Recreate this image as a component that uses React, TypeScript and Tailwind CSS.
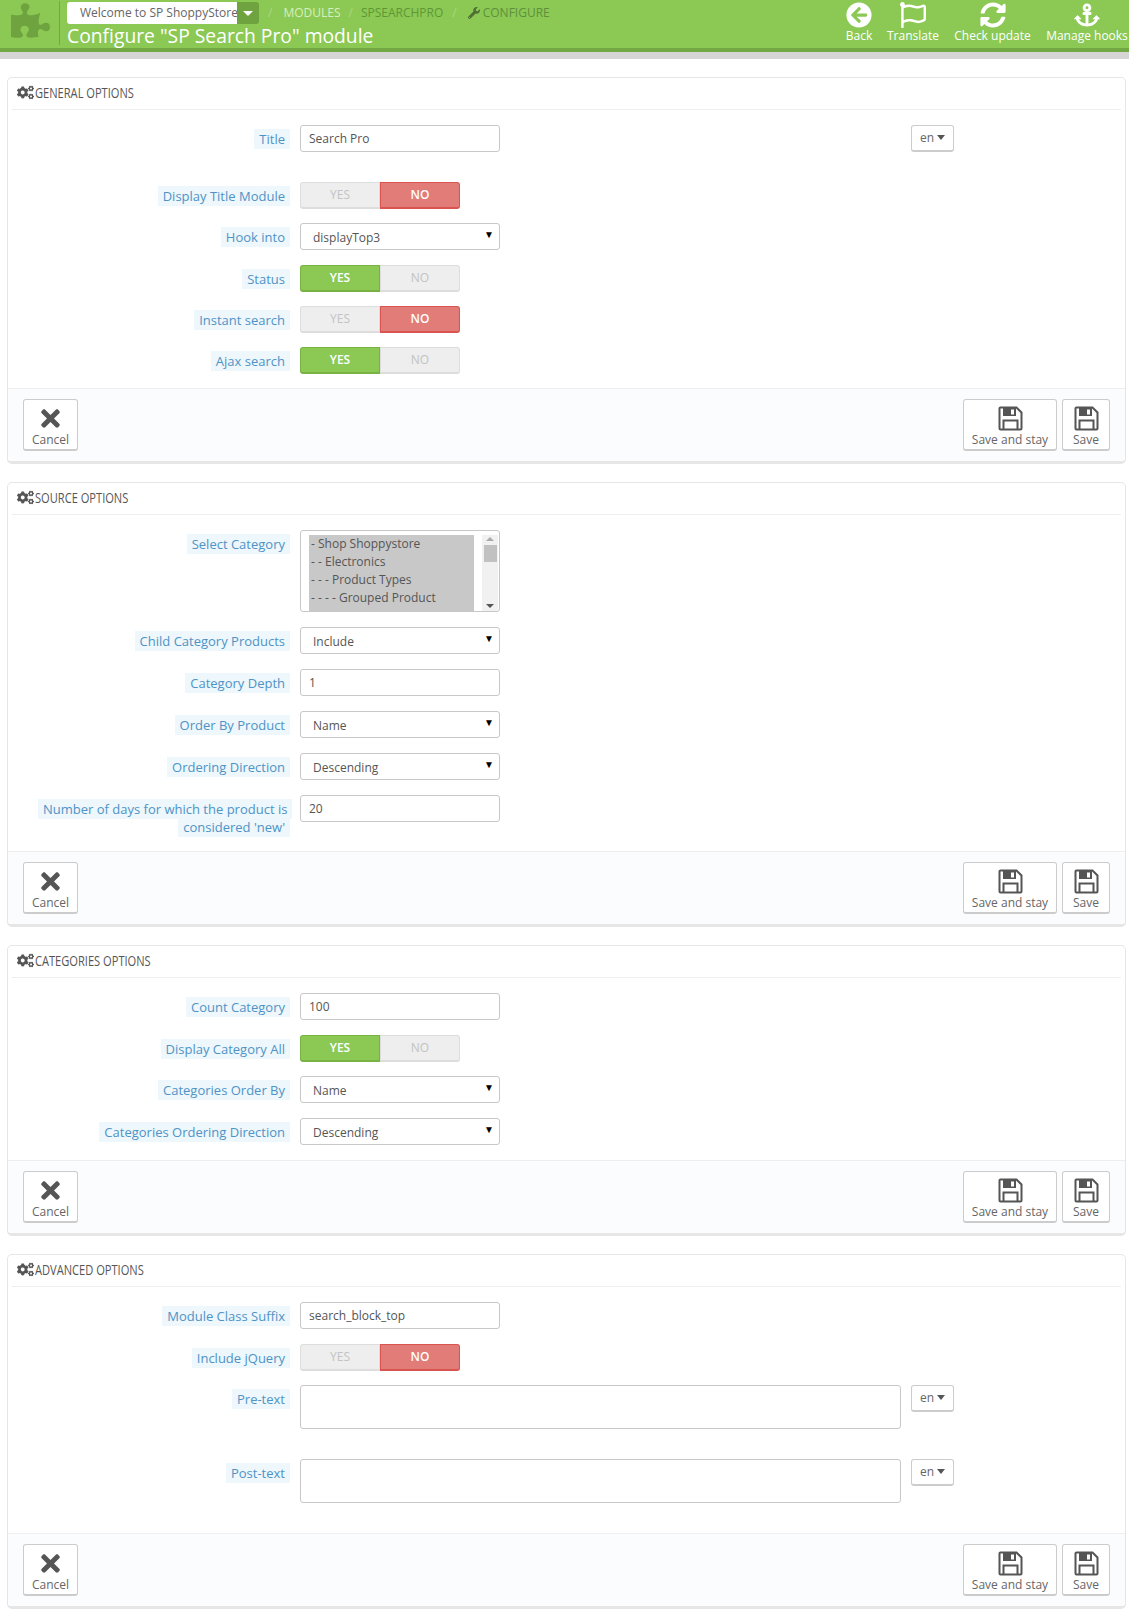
import type { ReactNode } from "react";
import {
  FaAnchor,
  FaArrowCircleLeft,
  FaCogs,
  FaPuzzlePiece,
  FaRegFlag,
  FaSyncAlt,
  FaTimes,
  FaWrench,
} from "react-icons/fa";

const fieldClass = "h-[27px] w-[200px] rounded-[3px] border border-[#c7c7c7] bg-white text-[#555]";

function SaveIcon() {
  return (
    <svg width="25" height="25" viewBox="0 0 25 25">
      <path d="M2.5 1.5h16l5 5v16a1 1 0 0 1-1 1h-20a1 1 0 0 1-1-1v-20a1 1 0 0 1 1-1z" fill="none" stroke="#555" strokeWidth="2" />
      <path d="M5 2h13v8H5z" fill="#555" />
      <path d="M13 3.5h3v5h-3z" fill="#fff" />
      <path d="M5.5 23v-8.5h14V23" fill="none" stroke="#555" strokeWidth="2" />
    </svg>
  );
}

function Label({ children }: { children: ReactNode }) {
  return (
    <div className="w-[282px] shrink-0 pl-[30px] pt-[5px] text-right text-[13px] leading-[18px]">
      <span className="bg-[#edf7fc] px-[5px] py-[1px] text-[#4f93c6] [box-decoration-break:clone]">{children}</span>
    </div>
  );
}

function Row({ label, children, mb = "mb-[15px]" }: { label: ReactNode; children: ReactNode; mb?: string }) {
  return (
    <div className={`flex gap-[10px] ${mb}`}>
      <Label>{label}</Label>
      {children}
    </div>
  );
}

function TextField({ value }: { value: string }) {
  return <div className={`${fieldClass} px-[8px] text-[12px] leading-[25px]`}>{value}</div>;
}

function SelectField({ value }: { value: string }) {
  return (
    <div className={`${fieldClass} relative pl-[12px] text-[12px] leading-[27px]`}>
      {value}
      <span className="absolute right-[5px] top-[-3px] text-[10px] text-black">▼</span>
    </div>
  );
}

function Toggle({ on }: { on: boolean }) {
  return (
    <div className="flex h-[27px] w-[160px] text-[12px] font-semibold leading-[23px]">
      <div
        className={`w-[80px] rounded-l-[3px] border border-b-2 text-center ${
          on ? "border-[#78b243] bg-[#8bc954] text-white" : "border-[#ddd] bg-[#eee] font-normal text-[#c3c3c3]"
        }`}
      >
        YES
      </div>
      <div
        className={`w-[80px] rounded-r-[3px] border border-b-2 text-center ${
          on ? "border-[#ddd] bg-[#eee] font-normal text-[#c3c3c3]" : "border-[#d9534f] bg-[#e27c79] text-white"
        }`}
      >
        NO
      </div>
    </div>
  );
}

function LangButton({ ml }: { ml: string }) {
  return (
    <div
      className={`flex h-[27px] w-[43px] items-center justify-center gap-[3px] rounded-[3px] border border-b-2 border-[#ccc] bg-white text-[12px] text-[#666] ${ml}`}
    >
      en
      <span className="mt-[-2px] h-0 w-0 border-x-[4px] border-t-[5px] border-x-transparent border-t-[#555]" />
    </div>
  );
}

function ActionButton({ icon, text, w }: { icon: ReactNode; text: string; w: string }) {
  return (
    <div
      className={`flex h-[52px] flex-col items-center rounded-[3px] border border-b-2 border-[#ccc] bg-white pt-[4px] ${w}`}
    >
      <div className="flex h-[28px] items-center text-[27px] text-[#555]">{icon}</div>
      <div className="text-[12px] leading-[15px] text-[#666]">{text}</div>
    </div>
  );
}

function Panel({ title, children, mb }: { title: string; children: ReactNode; mb: string }) {
  return (
    <section className={`ml-[7px] mr-[3px] rounded-[5px] border border-b-[3px] border-[#e6e6e6] bg-white ${mb}`}>
      <div className="mx-[4px] flex h-[32px] items-center gap-[1px] border-b border-[#eee] pb-[2px] pl-[5px] text-[#555]">
        <FaCogs className="text-[17px]" />
        <span className="origin-left scale-x-[0.74] text-[15px] uppercase">{title}</span>
      </div>
      <div className="pt-[15px]">{children}</div>
      <div className="flex items-center gap-[5px] rounded-b-[5px] border-t border-[#eee] bg-[#fbfcfe] px-[15px] pb-[10px] pt-[10px]">
        <ActionButton icon={<FaTimes />} text="Cancel" w="w-[55px]" />
        <div className="flex-1" />
        <ActionButton icon={<SaveIcon />} text="Save and stay" w="w-[94px]" />
        <ActionButton icon={<SaveIcon />} text="Save" w="w-[48px]" />
      </div>
    </section>
  );
}

function CategoryList() {
  const items = ["- Shop Shoppystore", "- - Electronics", "- - - Product Types", "- - - - Grouped Product"];
  return (
    <div className="flex h-[82px] w-[200px] rounded-[3px] border border-[#c7c7c7] bg-white pl-[8px] pt-[4px] text-[12px] text-[#555]">
      <div className="h-[76px] w-[165px] overflow-hidden bg-[#c8c8c8] pl-[2px]">
        {items.map((item) => (
          <div key={item} className="h-[18px] leading-[18px]">
            {item}
          </div>
        ))}
      </div>
      <div className="ml-[8px] flex w-[16px] flex-col items-center bg-[#f1f1f1]">
        <span className="mt-[2px] h-0 w-0 border-x-[4px] border-b-[4px] border-x-transparent border-b-[#aaa]" />
        <span className="mt-[4px] h-[17px] w-[13px] bg-[#c1c1c1]" />
        <span className="mb-[3px] mt-auto h-0 w-0 border-x-[4px] border-t-[4px] border-x-transparent border-t-[#555]" />
      </div>
    </div>
  );
}

function TextArea() {
  return <div className="h-[44px] w-[601px] rounded-[3px] border border-[#c7c7c7] bg-white" />;
}

function HeaderAction({ icon, text, w }: { icon: ReactNode; text: string; w: string }) {
  return (
    <div className={`flex flex-col items-center text-white ${w}`}>
      <div className="flex h-[27px] items-center text-[26px]">{icon}</div>
      <div className="whitespace-nowrap text-[12px] leading-[16px]">{text}</div>
    </div>
  );
}

export default function App() {
  return (
    <div className="min-h-[1613px] overflow-hidden bg-white [font-family:'Open_Sans',sans-serif]">
      <header className="border-b-[7px] border-[#d5d5d5]">
        <div className="flex h-[52px] border-b-[4px] border-[#72a844] bg-[#8bc954]">
          <div className="ml-[11px] mt-[1px] h-[44px] w-[49px] border-r border-[#72a844]">
            <FaPuzzlePiece className="text-[39px] text-[#6fa33f]" />
          </div>
          <div className="ml-[7px] flex-1">
            <div className="mt-[2px] flex h-[22px] items-center text-[12px]">
              <div className="h-[22px] w-[170px] overflow-hidden whitespace-nowrap rounded-l-[3px] bg-white pl-[13px] leading-[22px] text-[#666]">
                Welcome to SP ShoppyStore
              </div>
              <div className="flex h-[22px] w-[22px] items-center justify-center rounded-r-[3px] bg-[#6fa33f]">
                <span className="h-0 w-0 border-x-[5px] border-t-[5px] border-x-transparent border-t-white" />
              </div>
              <span className="ml-[9px] text-[#a9d886]">/</span>
              <span className="ml-[11px] text-[#d8efbd]">MODULES</span>
              <span className="ml-[8px] text-[#a9d886]">/</span>
              <span className="ml-[8px] text-[#5f9635]">SPSEARCHPRO</span>
              <span className="ml-[9px] text-[#a9d886]">/</span>
              <FaWrench className="ml-[11px] text-[12px] text-[#4f6f33]" />
              <span className="ml-[3px] text-[#5f8f3c]">CONFIGURE</span>
            </div>
            <div className="mt-[-1px] text-[19.3px] leading-[25px] text-white">Configure "SP Search Pro" module</div>
          </div>
          <div className="mr-[1px] flex gap-[15px] pt-[1px]">
            <HeaderAction icon={<FaArrowCircleLeft />} text="Back" w="w-[26px]" />
            <HeaderAction icon={<FaRegFlag />} text="Translate" w="w-[52px]" />
            <HeaderAction icon={<FaSyncAlt />} text="Check update" w="w-[77px]" />
            <HeaderAction icon={<FaAnchor />} text="Manage hooks" w="w-[82px]" />
          </div>
        </div>
      </header>

      <div className="pt-[18px]">
        <Panel title="General options" mb="mb-[18px]">
          <Row label="Title" mb="mb-[30px]">
            <TextField value="Search Pro" />
            <LangButton ml="ml-[401px]" />
          </Row>
          <Row label="Display Title Module" mb="mb-[14px]">
            <Toggle on={false} />
          </Row>
          <Row label="Hook into">
            <SelectField value="displayTop3" />
          </Row>
          <Row label="Status" mb="mb-[14px]">
            <Toggle on />
          </Row>
          <Row label="Instant search" mb="mb-[14px]">
            <Toggle on={false} />
          </Row>
          <Row label="Ajax search" mb="mb-[14px]">
            <Toggle on />
          </Row>
        </Panel>

        <Panel title="Source options" mb="mb-[18px]">
          <Row label="Select Category">
            <CategoryList />
          </Row>
          <Row label="Child Category Products">
            <SelectField value="Include" />
          </Row>
          <Row label="Category Depth">
            <TextField value="1" />
          </Row>
          <Row label="Order By Product">
            <SelectField value="Name" />
          </Row>
          <Row label="Ordering Direction">
            <SelectField value="Descending" />
          </Row>
          <Row
            label={
              <>
                Number of days for which the product is
                <br />
                considered 'new'
              </>
            }
            mb="mb-[15px]"
          >
            <TextField value="20" />
          </Row>
        </Panel>

        <Panel title="Categories options" mb="mb-[18px]">
          <Row label="Count Category">
            <TextField value="100" />
          </Row>
          <Row label="Display Category All" mb="mb-[14px]">
            <Toggle on />
          </Row>
          <Row label="Categories Order By">
            <SelectField value="Name" />
          </Row>
          <Row label="Categories Ordering Direction">
            <SelectField value="Descending" />
          </Row>
        </Panel>

        <Panel title="Advanced options" mb="mb-0">
          <Row label="Module Class Suffix">
            <TextField value="search_block_top" />
          </Row>
          <Row label="Include jQuery" mb="mb-[14px]">
            <Toggle on={false} />
          </Row>
          <Row label="Pre-text" mb="mb-[30px]">
            <TextArea />
            <LangButton ml="" />
          </Row>
          <Row label="Post-text" mb="mb-[30px]">
            <TextArea />
            <LangButton ml="" />
          </Row>
        </Panel>
      </div>
    </div>
  );
}
